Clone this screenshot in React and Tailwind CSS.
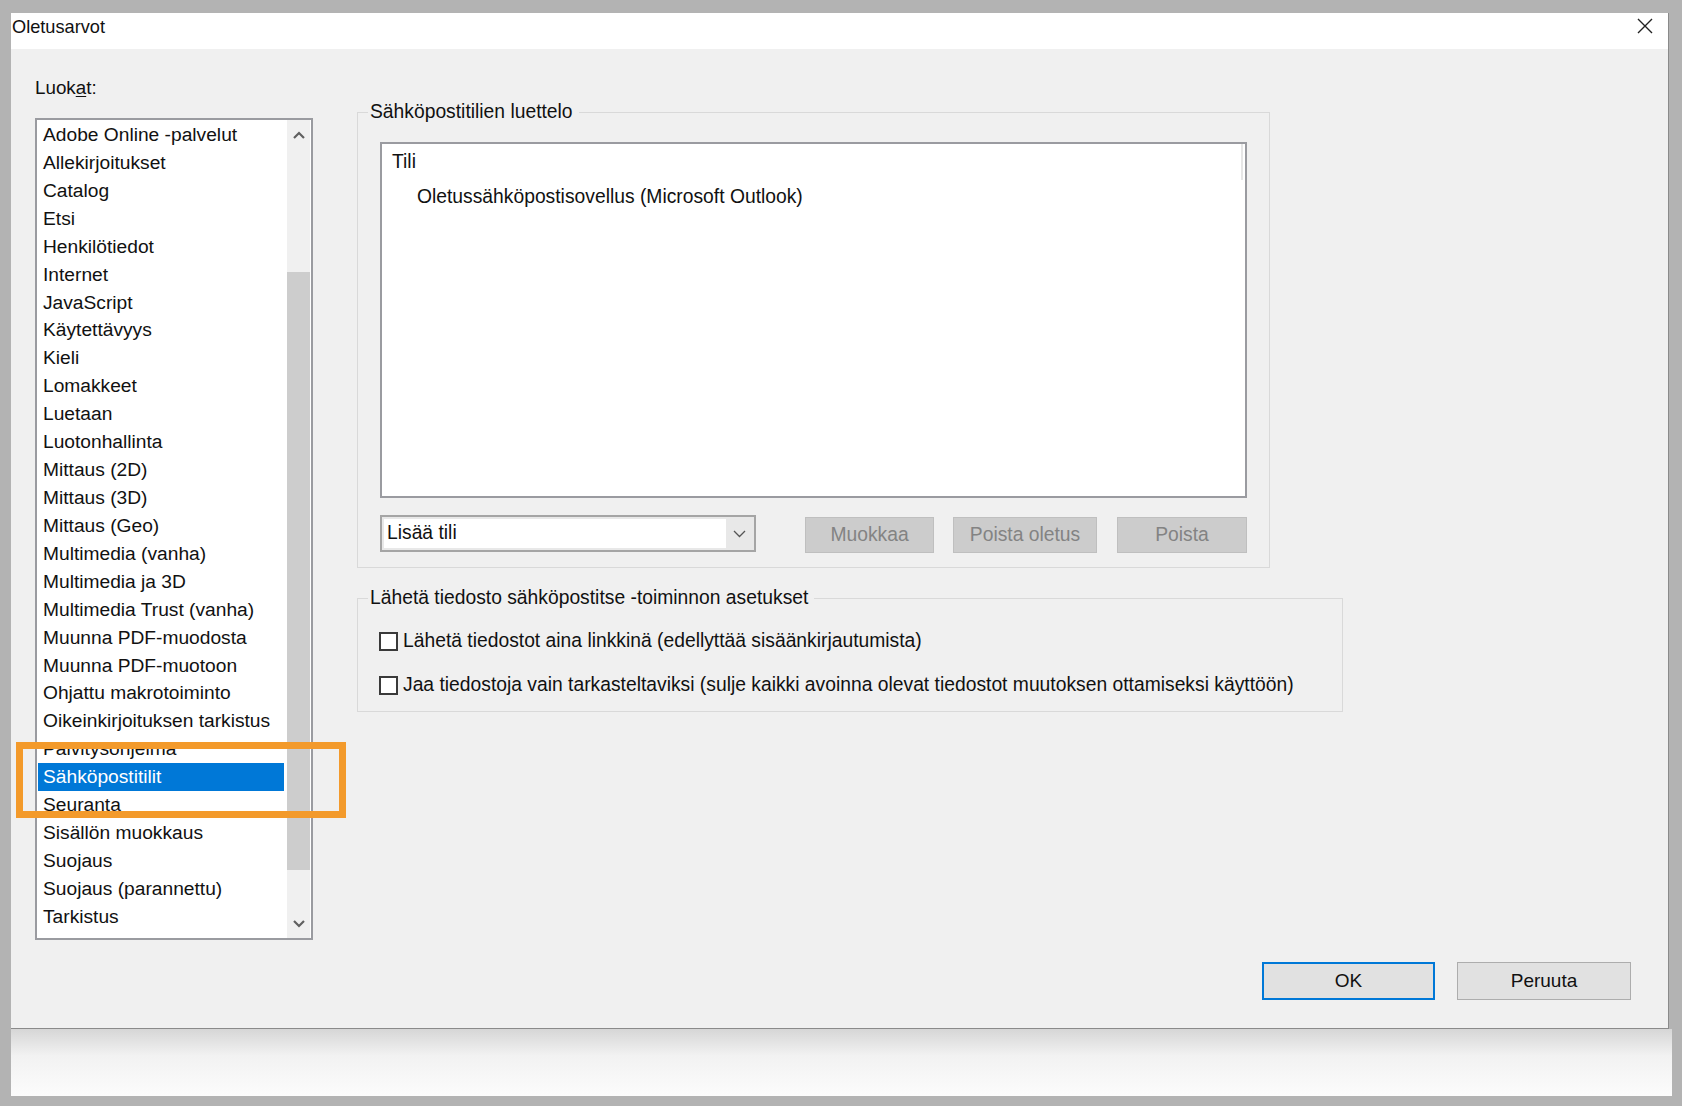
import React from "react";

const categories = [
  "Adobe Online -palvelut",
  "Allekirjoitukset",
  "Catalog",
  "Etsi",
  "Henkilötiedot",
  "Internet",
  "JavaScript",
  "Käytettävyys",
  "Kieli",
  "Lomakkeet",
  "Luetaan",
  "Luotonhallinta",
  "Mittaus (2D)",
  "Mittaus (3D)",
  "Mittaus (Geo)",
  "Multimedia (vanha)",
  "Multimedia ja 3D",
  "Multimedia Trust (vanha)",
  "Muunna PDF-muodosta",
  "Muunna PDF-muotoon",
  "Ohjattu makrotoiminto",
  "Oikeinkirjoituksen tarkistus",
  "Päivitysohjelma",
  "Sähköpostitilit",
  "Seuranta",
  "Sisällön muokkaus",
  "Suojaus",
  "Suojaus (parannettu)",
  "Tarkistus",
  "Värienhallinta",
];

const selected = "Sähköpostitilit";

const Chevron = ({ up }) => (
  <svg width="12" height="8" viewBox="0 0 12 8">
    <polyline
      points={up ? "1,7 6,2 11,7" : "1,1 6,6 11,1"}
      fill="none"
      stroke="#606060"
      strokeWidth="2.2"
    />
  </svg>
);

const CategoryList = () => (
  <div className="flex w-[278px] h-[822px] border-2 border-[#9a9ba0] bg-white text-[19.2px]">
    <div className="flex flex-col w-[250px] pt-[1px] pl-[1px] pr-[3px] overflow-hidden">
      {categories.map((c) => (
        <div
          key={c}
          className={
            c === selected
              ? "shrink-0 h-[27.93px] leading-[27.93px] px-[5px] whitespace-nowrap bg-[#0078d7] text-white"
              : "shrink-0 h-[27.93px] leading-[27.93px] px-[5px] whitespace-nowrap"
          }
        >
          {c}
        </div>
      ))}
    </div>
    <div className="flex flex-col w-[23px] mr-[1px] bg-[#f0f0f0]">
      <div className="h-[30px] flex items-center justify-center">
        <Chevron up />
      </div>
      <div className="h-[122px]" />
      <div className="h-[598px] bg-[#cdcdcd]" />
      <div className="flex-1" />
      <div className="h-[28px] flex items-center justify-center">
        <Chevron />
      </div>
    </div>
  </div>
);

const DisabledButton = ({ label, className }) => (
  <div
    className={
      "h-[36px] mt-[2px] flex items-center justify-center bg-[#cccccc] border border-[#bfbfbf] text-[#838383] " +
      className
    }
  >
    {label}
  </div>
);

const Checkbox = ({ label, className }) => (
  <div className={"flex items-center h-[22px] " + className}>
    <div className="w-[19px] h-[19px] border-2 border-[#3a3a3a] bg-white" />
    <span className="ml-[5px] leading-[22px] whitespace-nowrap">{label}</span>
  </div>
);

export default function App() {
  return (
    <div className="relative w-[1682px] h-[1106px] bg-[#b3b3b3] pt-[13px] pl-[11px] overflow-hidden font-['Liberation_Sans',Arial,sans-serif] text-[18.8px] text-[#111]">
      <div className="w-[1658px] h-[1016px] flex flex-col border-r border-b border-[#8a8a8a]">
        {/* title bar */}
        <div className="h-[36px] shrink-0 bg-white flex items-start justify-between pl-[1px] pr-[15px] pt-[3px]">
          <span className="leading-[22px] text-[18.2px]">Oletusarvot</span>
          <svg width="16" height="16" viewBox="0 0 16 16" className="mt-[2px]">
            <path d="M1 1 L15 15 M15 1 L1 15" stroke="#222" strokeWidth="1.4" fill="none" />
          </svg>
        </div>

        {/* body */}
        <div className="flex-1 bg-[#f0f0f0] flex flex-col">
          <div className="flex items-start pl-[24px] pt-[28px]">
            <div className="flex flex-col">
              <span className="leading-[22px]">
                Luok<span className="underline underline-offset-2">a</span>t:
              </span>
              <div className="mt-[19px]">
                <CategoryList />
              </div>
            </div>

            <div className="flex flex-col ml-[44px] mt-[24px] text-[19.3px]">
              <fieldset className="w-[913px] border border-[#d9d9d9] p-0 m-0">
                <legend className="ml-[10px] pl-[2px] pr-[6px] leading-[22px]">
                  Sähköpostitilien luettelo
                </legend>
                <div className="px-[22px] pt-[19px] pb-[14px]">
                  <div className="w-[867px] h-[356px] border-2 border-[#9a9ba0] bg-white flex flex-col">
                    <div className="h-[36px] flex items-center justify-between pl-[10px]">
                      <span>Tili</span>
                      <div className="w-[2px] h-[36px] bg-[#e6e6e6] mr-[2px]" />
                    </div>
                    <div className="h-[34px] flex items-center pl-[35px]">
                      Oletussähköpostisovellus (Microsoft Outlook)
                    </div>
                  </div>
                  <div className="flex items-start mt-[17px]">
                    <div className="w-[376px] h-[37px] border-2 border-[#a5a5a5] bg-[#e8e8e8] p-[2px] flex">
                      <div className="flex-1 bg-white flex items-center pl-[3px]">Lisää tili</div>
                      <div className="w-[26px] flex items-center justify-center">
                        <svg width="13" height="8" viewBox="0 0 13 8">
                          <polyline points="1,1 6.5,6.5 12,1" fill="none" stroke="#555" strokeWidth="1.3" />
                        </svg>
                      </div>
                    </div>
                    <DisabledButton label="Muokkaa" className="ml-[49px] w-[129px]" />
                    <DisabledButton label="Poista oletus" className="ml-[19px] w-[144px]" />
                    <DisabledButton label="Poista" className="ml-[20px] w-[130px]" />
                  </div>
                </div>
              </fieldset>

              <fieldset className="w-[986px] mt-[19px] border border-[#d9d9d9] p-0 m-0">
                <legend className="ml-[10px] pl-[2px] pr-[6px] leading-[22px]">
                  Lähetä tiedosto sähköpostitse -toiminnon asetukset
                </legend>
                <div className="pl-[21px] pt-[21px] pb-[15px]">
                  <Checkbox label="Lähetä tiedostot aina linkkinä (edellyttää sisäänkirjautumista)" />
                  <Checkbox
                    className="mt-[22px]"
                    label="Jaa tiedostoja vain tarkasteltaviksi (sulje kaikki avoinna olevat tiedostot muutoksen ottamiseksi käyttöön)"
                  />
                </div>
              </fieldset>
            </div>
          </div>

          <div className="flex-1" />

          <div className="flex justify-end gap-[22px] pr-[37px] pb-[28px] text-[19px]">
            <button className="w-[173px] h-[38px] border-2 border-[#0078d7] bg-[#e1e1e1]">OK</button>
            <button className="w-[174px] h-[38px] border border-[#adadad] bg-[#e1e1e1]">Peruuta</button>
          </div>
        </div>
      </div>

      <div className="w-[1661px] h-[67px] bg-linear-to-b from-[#d6d6d6] via-[#f2f2f2] via-40% to-[#fcfcfc]" />

      {/* orange highlight annotation */}
      <div className="absolute left-[16px] top-[742px] w-[330px] h-[76px] border-[7px] border-[#f39a2b] pointer-events-none" />
    </div>
  );
}
